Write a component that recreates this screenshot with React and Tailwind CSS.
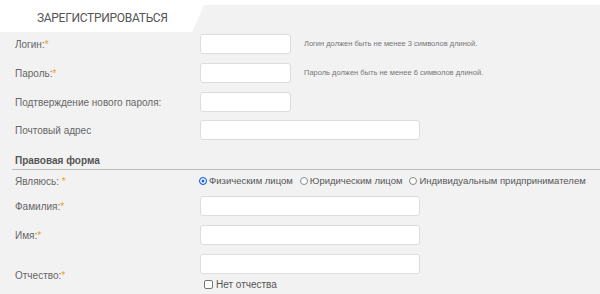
import React from "react";

const Star = () => <span className="text-[#f39c12]">*</span>;

function Row({ label, star, wide, hint, className = "" }) {
  return (
    <div className={`flex items-center h-[20px] ${className}`}>
      <div className="w-[200px] pl-[15px] text-[10px] text-[#666] whitespace-nowrap">
        {label}
        {star && <Star />}
      </div>
      <input
        className={`${wide ? "w-[220px]" : "w-[91px]"} h-[20px] bg-white border border-[#dcdcdc] rounded-[3px] outline-none`}
      />
      {hint && <div className="ml-[13px] text-[7.5px] text-[#777] whitespace-nowrap">{hint}</div>}
    </div>
  );
}

function Radio({ checked, label }) {
  return (
    <label className="flex items-center mr-[7px] whitespace-nowrap shrink-0">
      <span
        className={`w-[8px] h-[8px] rounded-full border shrink-0 ${checked ? "border-[#1a66d9] bg-[#1a66d9] shadow-[inset_0_0_0_1.5px_#fff]" : "border-[#888] bg-white"} mr-[2px]`}
      />
      <span>{label}</span>
    </label>
  );
}

export default function App() {
  return (
    <div className="w-[600px] h-[294px] bg-white overflow-hidden" style={{ fontFamily: '"Liberation Sans", Arial, sans-serif' }}>
      <div className="flex h-[32px]">
        <div className="w-[192px] flex items-center pl-[37px] pt-[3px] text-[12px] text-[#555] tracking-[-0.3px]" style={{ fontFamily: 'Roboto, sans-serif' }}>
          ЗАРЕГИСТРИРОВАТЬСЯ
        </div>
        <div className="flex-1 mt-[5px] bg-[#f2f2f2] [clip-path:polygon(12px_0,100%_0,100%_100%,0_100%)]" />
      </div>
      <div className="bg-[#f2f2f2] h-[262px] pt-[2px]">
        <Row label="Логин:" star hint="Логин должен быть не менее 3 символов длиной." className="mb-[9px]" />
        <Row label="Пароль:" star hint="Пароль должен быть не менее 6 символов длиной." className="mb-[9px]" />
        <Row label="Подтверждение нового пароля:" className="mb-[8px]" />
        <Row label="Почтовый адрес" wide />
        <div className="mt-[14px] ml-[12px] pl-[3px] h-[16px] border-b border-[#bcbcbc] text-[10px] font-bold text-[#555] leading-[14px]">
          Правовая форма
        </div>
        <div className="flex items-center h-[20px] mt-[1px] text-[9.5px] text-[#555]">
          <div className="w-[199px] shrink-0 pl-[15px] text-[10px] text-[#666]">
            Являюсь: <Star />
          </div>
          <Radio checked label="Физическим лицом" />
          <Radio label="Юридическим лицом" />
          <Radio label="Индивидуальным придпринимателем" />
        </div>
        <div className="mt-[5px]">
          <Row label="Фамилия:" star wide className="mb-[9px]" />
          <Row label="Имя:" star wide className="mb-[9px]" />
          <div className="flex">
            <div className="w-[200px] pl-[15px] pt-[14px] text-[10px] text-[#666]">
              Отчество:<Star />
            </div>
            <div className="flex flex-col">
              <input className="w-[220px] h-[20px] bg-white border border-[#dcdcdc] rounded-[3px] outline-none" />
              <label className="flex items-center mt-[3px] ml-[4px] text-[10px] text-[#555]">
                <span className="w-[9px] h-[9px] border border-[#777] rounded-[2px] bg-white mr-[3px]" />
                Нет отчества
              </label>
            </div>
          </div>
        </div>
      </div>
    </div>
  );
}
